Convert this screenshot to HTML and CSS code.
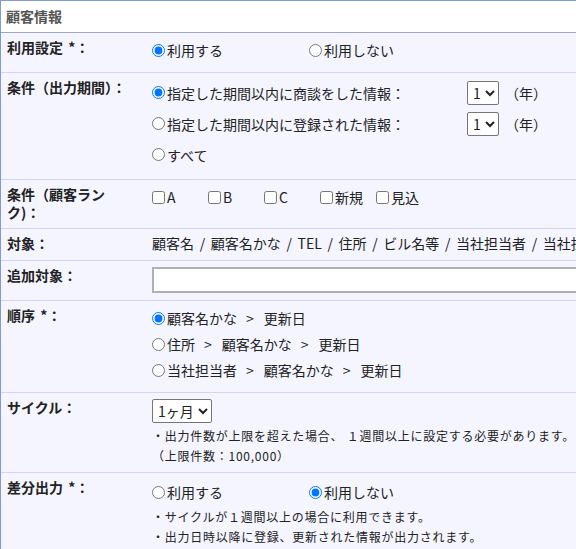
FILE: index.html
```html
<!DOCTYPE html>
<html lang="ja">
<head>
<meta charset="utf-8">
<title>顧客情報</title>
<link rel="stylesheet" href="styles.css">
</head>
<body>
<div class="panel">
  <div class="panel-head">顧客情報</div>

  <div class="row">
    <div class="label">利用設定 *：</div>
    <div class="value">
      <div class="line">
        <label class="opt"><input type="radio" name="use" checked>利用する</label>
        <label class="opt"><input type="radio" name="use">利用しない</label>
      </div>
    </div>
  </div>

  <div class="row">
    <div class="label">条件（出力期間）：</div>
    <div class="value">
      <div class="line tall">
        <label class="period"><input type="radio" name="period" checked>指定した期間以内に商談をした情報：</label>
        <select class="sel"><option>1</option></select><span class="unit">（年）</span>
      </div>
      <div class="line tall">
        <label class="period"><input type="radio" name="period">指定した期間以内に登録された情報：</label>
        <select class="sel"><option>1</option></select><span class="unit">（年）</span>
      </div>
      <div class="line tall">
        <label class="opt"><input type="radio" name="period">すべて</label>
      </div>
    </div>
  </div>

  <div class="row">
    <div class="label">条件（顧客ランク)：</div>
    <div class="value">
      <div class="line">
        <label class="chk"><input type="checkbox">A</label>
        <label class="chk"><input type="checkbox">B</label>
        <label class="chk"><input type="checkbox">C</label>
        <label class="chk"><input type="checkbox">新規</label>
        <label class="chk"><input type="checkbox">見込</label>
      </div>
    </div>
  </div>

  <div class="row">
    <div class="label">対象：</div>
    <div class="value text">顧客名 / 顧客名かな / TEL / 住所 / ビル名等 / 当社担当者 / 当社担当者名かな</div>
  </div>

  <div class="row">
    <div class="label">追加対象：</div>
    <div class="value field"><input type="text" class="txt"></div>
  </div>

  <div class="row">
    <div class="label">順序 *：</div>
    <div class="value">
      <div class="line"><label class="opt"><input type="radio" name="order" checked>顧客名かな<span class="gt">&gt;</span>更新日</label></div>
      <div class="line"><label class="opt"><input type="radio" name="order">住所<span class="gt">&gt;</span>顧客名かな<span class="gt">&gt;</span>更新日</label></div>
      <div class="line"><label class="opt"><input type="radio" name="order">当社担当者<span class="gt">&gt;</span>顧客名かな<span class="gt">&gt;</span>更新日</label></div>
    </div>
  </div>

  <div class="row">
    <div class="label">サイクル：</div>
    <div class="value cycle">
      <div class="line"><select class="sel"><option>1ヶ月</option></select></div>
      <div class="notes">
        <div>・出力件数が上限を超えた場合、 １週間以上に設定する必要があります。</div>
        <div>（上限件数：100,000）</div>
      </div>
    </div>
  </div>

  <div class="row">
    <div class="label">差分出力 *：</div>
    <div class="value diff">
      <div class="line">
        <label class="opt"><input type="radio" name="diff">利用する</label>
        <label class="opt"><input type="radio" name="diff" checked>利用しない</label>
      </div>
      <div class="notes">
        <div>・サイクルが１週間以上の場合に利用できます。</div>
        <div>・出力日時以降に登録、更新された情報が出力されます。</div>
      </div>
    </div>
  </div>
</div>
</body>
</html>
```

FILE: styles.css
```css
html, body {
  overflow: hidden;
}
body {
  margin: 0;
  font-family: "Noto Sans CJK JP", "Noto Sans", sans-serif;
  font-size: 14px;
  color: #222;
  background: #f4f5fe;
}
.panel {
  width: 780px;
  border-top: 1px solid #7f9bd3;
  border-left: 1px solid #7f9bd3;
  background: #f4f5fe;
}
.panel-head {
  height: 31px;
  line-height: 31px;
  padding-left: 5px;
  background: #fff;
  border-bottom: 1px solid #9ea6c6;
  font-weight: bold;
  color: #555;
}
.row {
  display: grid;
  grid-template-columns: 151px 1fr;
  border-bottom: 1px solid #d2d4f1;
}
.label {
  padding: 5px 17px 7px 6px;
  line-height: 18px;
  font-weight: bold;
  color: #222;
  word-spacing: 2px;
}
.value {
  padding: 4px 0 9px 0;
  min-width: 0;
}
.value.text {
  padding: 5px 0 8px 0;
  line-height: 18px;
  white-space: nowrap;
  word-spacing: 2.5px;
}
.value.field {
  padding: 6px 0 7px 0;
}
.value.cycle {
  padding: 5px 0 6px 0;
}
.value.diff {
  padding: 6px 0 6px 0;
}
.line {
  display: flex;
  align-items: center;
  height: 26px;
  white-space: nowrap;
}
.line.tall {
  height: 31px;
}
.opt, .chk, .period {
  display: inline-flex;
  align-items: center;
}
.opt {
  width: 157px;
  flex: none;
}
.chk {
  width: 56px;
  flex: none;
}
.period {
  width: 315px;
  flex: none;
}
input[type="radio"], input[type="checkbox"] {
  margin: 0 2px 0 0;
  width: 13px;
  height: 13px;
}
.gt {
  margin: 0 10px 0 9px;
}
.sel {
  height: 24px;
  font-family: "Noto Sans CJK JP", sans-serif;
  font-size: 14px;
  color: #222;
  padding: 0 1px;
  margin: 0;
  background: #fff;
  border: 1px solid #767676;
  border-radius: 2px;
}
.unit {
  margin-left: 6px;
}
.txt {
  display: block;
  box-sizing: border-box;
  width: 560px;
  height: 26px;
  margin: 0;
  border: 2px solid #b0b0b0;
  background: #fff;
}
.notes {
  margin-top: 2px;
  font-size: 12px;
  letter-spacing: 0.75px;
  line-height: 20px;
  white-space: nowrap;
  color: #222;
}
```
